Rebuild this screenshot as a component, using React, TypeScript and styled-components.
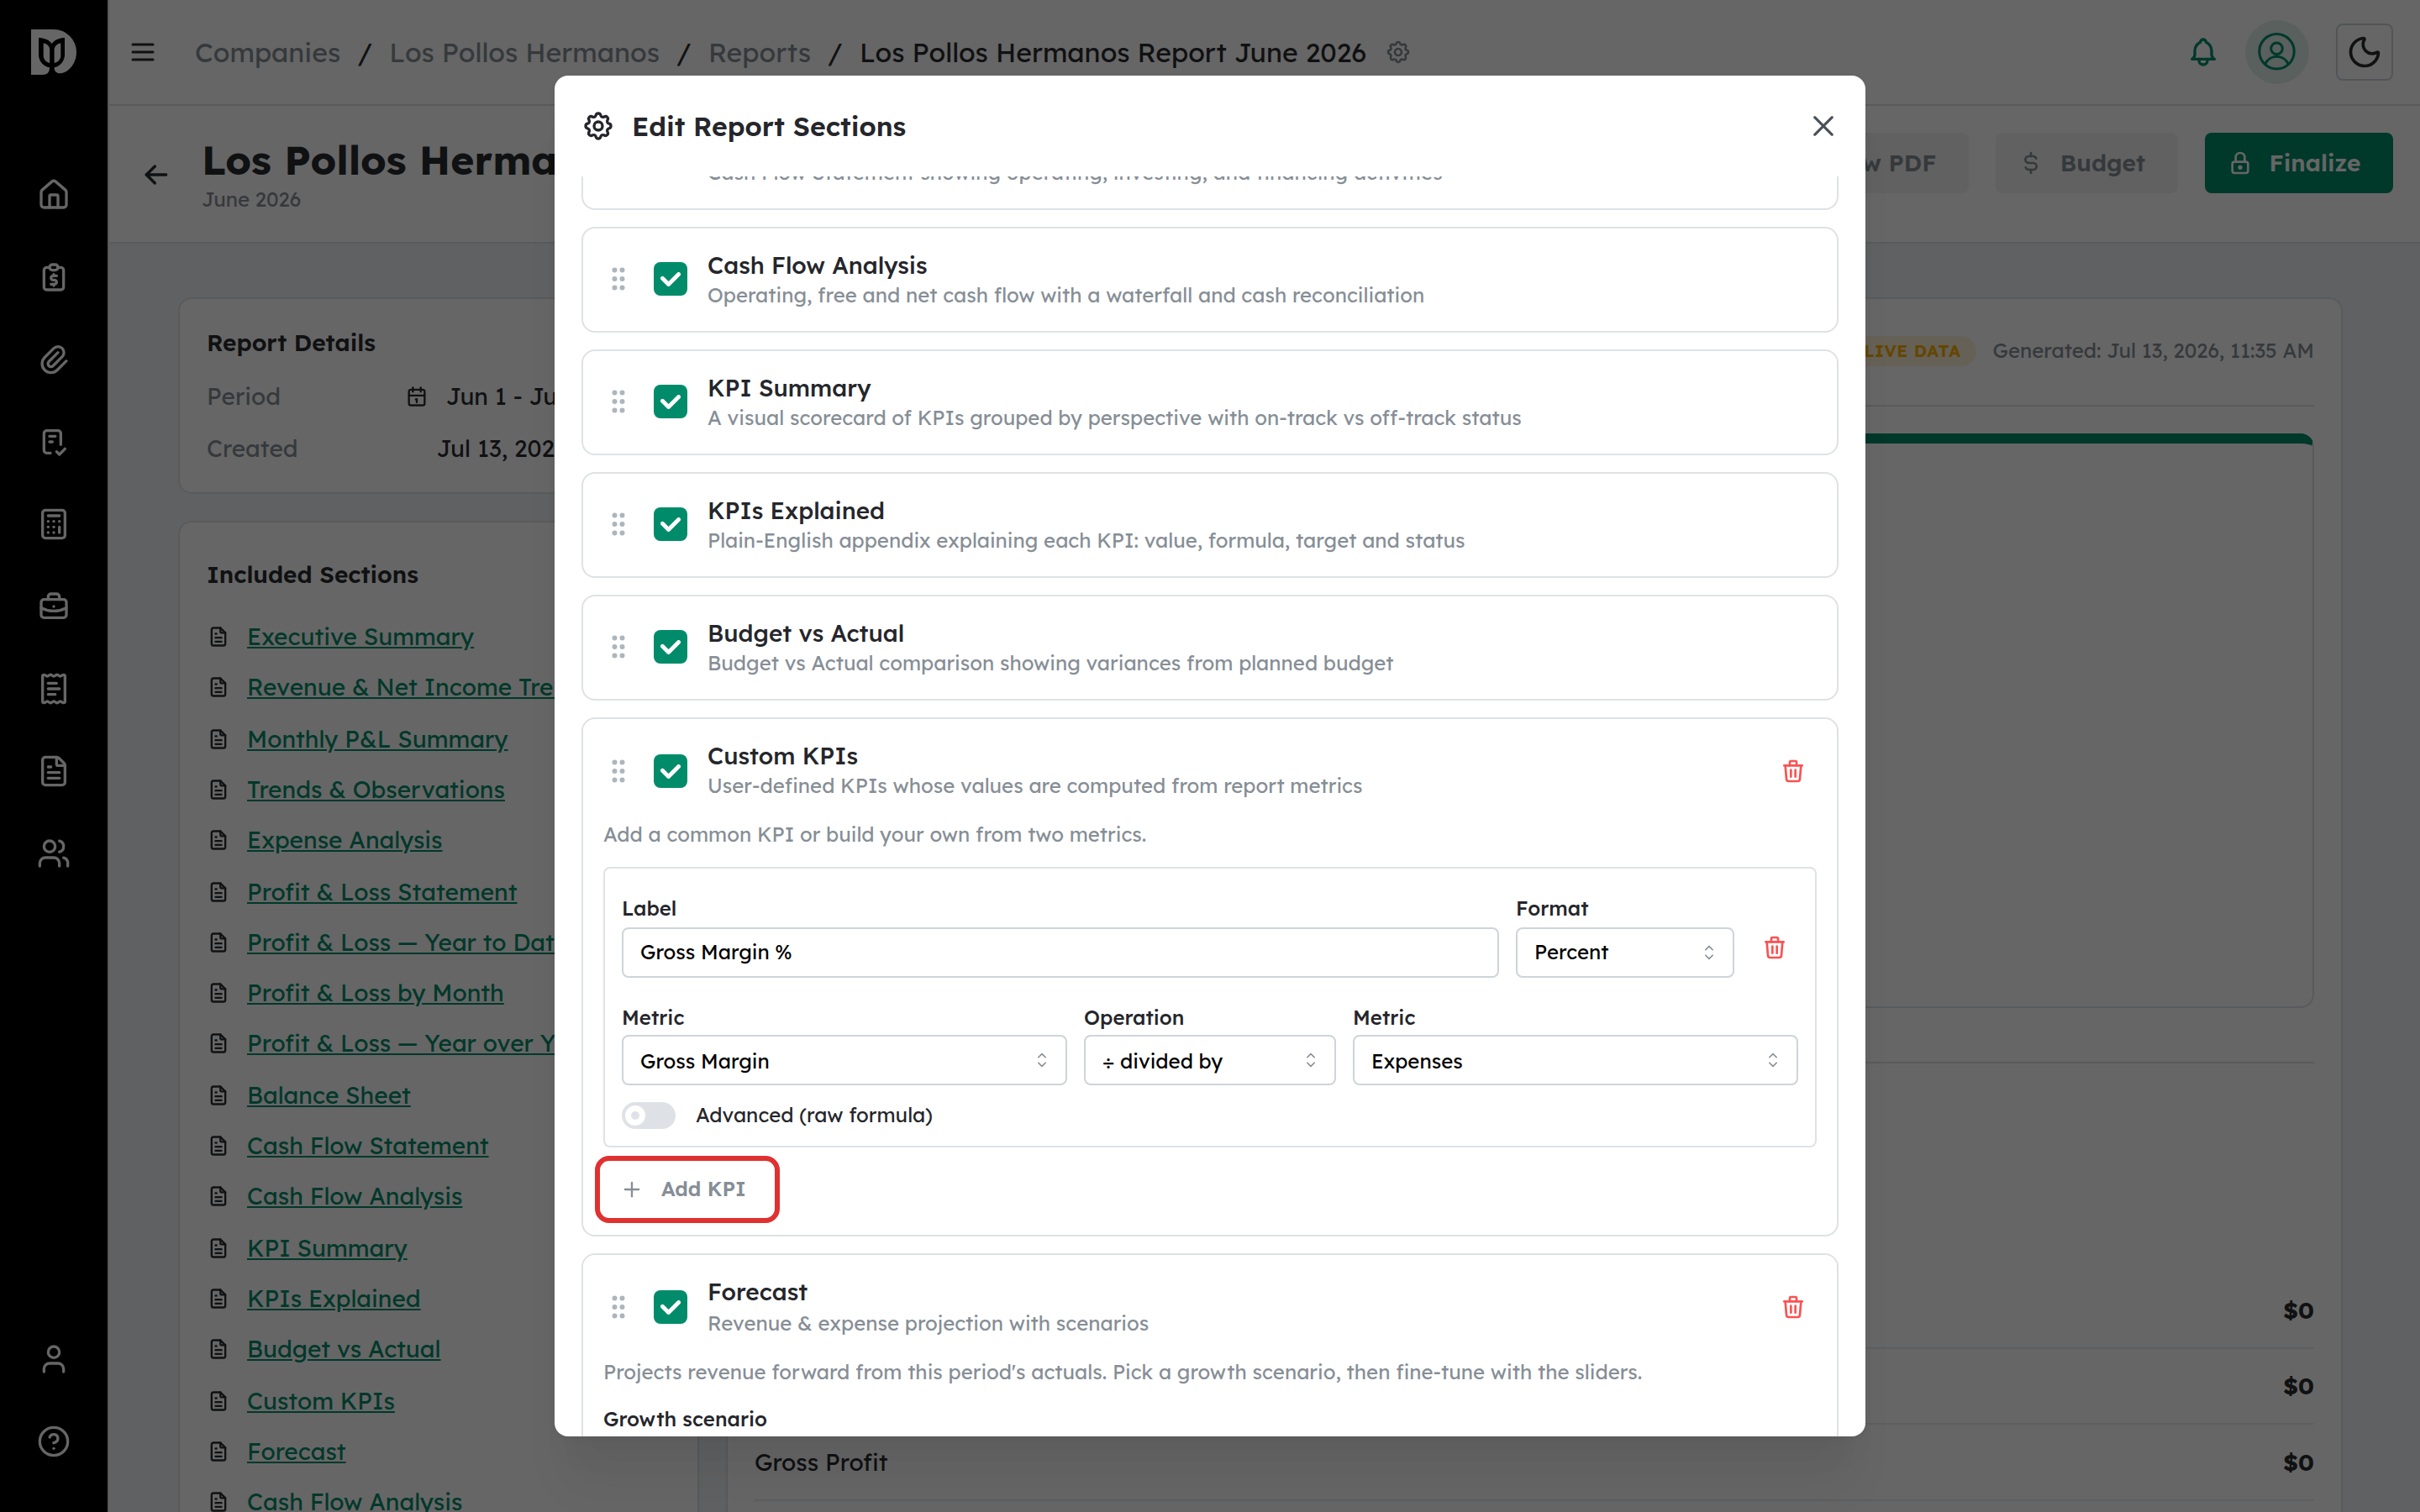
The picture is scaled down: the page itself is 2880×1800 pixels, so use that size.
import React from "react";
import styled, { createGlobalStyle, css } from "styled-components";
import { House, Calculator, ReceiptText, FileText, Users, User, CircleHelp, Moon } from "lucide-react";
import {
  TbReportMoney,
  TbPaperclip,
  TbChecklist,
  TbBriefcase,
  TbFileText,
  TbArrowLeft,
  TbMenu2,
  TbSettings,
  TbBell,
  TbLock,
  TbCurrencyDollar,
  TbCalendar,
  TbTrash,
  TbGripVertical,
  TbPlus,
  TbEye,
} from "react-icons/tb";

const color = {
  green: "#008c6a",
  text: "#25262b",
  ink: "#292b2f",
  dimmed: "#868e96",
  border: "#dee2e6",
  inputBorder: "#ced4da",
  page: "#f1f3f5",
  red: "#fa5252",
  highlight: "#e03131",
};

const GlobalStyle = createGlobalStyle`
  * { box-sizing: border-box; }
  body {
    margin: 0;
    font-family: "Lexend", "Inter", sans-serif;
    color: ${color.ink};
    background: #fff;
  }
  svg { display: block; flex-shrink: 0; }
`;

/* ---------- application shell ---------- */

const Shell = styled.div`
  position: relative;
  display: flex;
  width: 2880px;
  height: 1800px;
  overflow: hidden;
`;

const Sidebar = styled.nav`
  display: flex;
  flex-direction: column;
  align-items: center;
  width: 128px;
  padding: 35px 0 64px;
  background: #000;
  color: #fff;
`;

const NavGroup = styled.div<{ $bottom?: boolean }>`
  display: flex;
  flex-direction: column;
  gap: 58px;
  ${(p) => (p.$bottom ? "margin-top: auto;" : "margin-top: 123px;")}
`;

const Main = styled.div`
  flex: 1;
  display: flex;
  flex-direction: column;
  min-width: 0;
  border-left: 2px solid ${color.border};
`;

const TopBar = styled.header`
  display: flex;
  align-items: center;
  height: 126px;
  padding: 0 32px 0 22px;
  border-bottom: 2px solid ${color.border};
  background: #fff;
`;

const Breadcrumbs = styled.div`
  display: flex;
  align-items: center;
  margin-left: 44px;
  font-size: 32px;
  line-height: 50px;
  white-space: nowrap;
`;

const Crumb = styled.span<{ $current?: boolean }>`
  color: ${(p) => (p.$current ? color.ink : color.dimmed)};
`;

const Slash = styled.span`
  width: 58px;
  text-align: center;
`;

const CrumbGear = styled.span`
  margin-left: 22px;
  color: ${color.dimmed};
`;

const TopActions = styled.div`
  display: flex;
  align-items: center;
  margin-left: auto;
  color: ${color.green};
`;

const Avatar = styled.div`
  display: flex;
  align-items: center;
  justify-content: center;
  width: 76px;
  height: 76px;
  margin: 0 32px 0 30px;
  border-radius: 50%;
  background: rgba(0, 140, 106, 0.13);
`;

const ThemeButton = styled.button`
  display: flex;
  align-items: center;
  justify-content: center;
  width: 68px;
  height: 68px;
  padding: 0;
  border: 2px solid ${color.inputBorder};
  border-radius: 8px;
  background: #fff;
  color: ${color.ink};
`;

const PageHeader = styled.div`
  display: flex;
  align-items: flex-start;
  height: 164px;
  padding: 32px 32px 0 36px;
  border-bottom: 2px solid ${color.border};
  background: #fff;
`;

const BackArrow = styled.div`
  margin-top: 30px;
`;

const TitleBlock = styled.div`
  margin: 1px 0 0 34px;
  white-space: nowrap;
`;

const PageTitle = styled.h1`
  margin: 0;
  font-size: 48px;
  line-height: 62px;
  font-weight: 700;
`;

const PageSubtitle = styled.div`
  font-size: 24px;
  line-height: 32px;
  color: ${color.dimmed};
`;

const PageActions = styled.div`
  display: flex;
  gap: 32px;
  margin-left: auto;
`;

const ActionButton = styled.button<{ $primary?: boolean }>`
  display: flex;
  align-items: center;
  gap: 19px;
  height: 72px;
  padding: 0 38.5px 0 26px;
  border: 0;
  border-radius: 8px;
  font: 600 28px/36px "Lexend", "Inter", sans-serif;
  white-space: nowrap;
  background: ${(p) => (p.$primary ? color.green : "#f2f2f2")};
  color: ${(p) => (p.$primary ? "#fff" : color.dimmed)};
`;

const Content = styled.div`
  flex: 1;
  display: flex;
  align-items: stretch;
  gap: 32px;
  min-height: 0;
  padding: 64px 92px 0 82px;
  background: ${color.page};
`;

const SideColumn = styled.div`
  display: flex;
  flex-direction: column;
  gap: 32px;
  width: 620px;
`;

const Card = styled.section<{ $grow?: boolean }>`
  padding: 30px 32px;
  border: 2px solid ${color.border};
  border-radius: 16px;
  background: #fff;
  ${(p) =>
    p.$grow &&
    css`
      flex: 1;
      min-height: 0;
      border-bottom: 0;
      border-radius: 16px 16px 0 0;
      padding-bottom: 0;
    `}
`;

const CardTitle = styled.h2<{ $offset?: number }>`
  margin: ${(p) => p.$offset ?? 0}px 0 0;
  font-size: 28px;
  line-height: 44px;
  font-weight: 600;
`;

const DetailList = styled.div`
  display: flex;
  flex-direction: column;
  gap: 18px;
  margin-top: 20px;
`;

const DetailRow = styled.div`
  display: flex;
  align-items: center;
  justify-content: space-between;
  font-size: 28px;
  line-height: 44px;
  white-space: nowrap;
`;

const DetailLabel = styled.span`
  color: ${color.dimmed};
`;

const DetailValue = styled.span`
  display: flex;
  align-items: center;
  gap: 21px;
`;

const SectionLinks = styled.div`
  display: flex;
  flex-direction: column;
  margin-top: 30px;
`;

const SectionLinkRow = styled.div<{ $pitch: number }>`
  display: flex;
  align-items: flex-start;
  gap: 20px;
  height: ${(p) => p.$pitch}px;
  svg {
    margin-top: 8px;
  }
`;

const SectionLink = styled.a`
  color: ${color.green};
  font-size: 28px;
  line-height: 44px;
  text-decoration: underline;
  white-space: nowrap;
`;

const ReportMeta = styled.div`
  display: flex;
  align-items: center;
  justify-content: flex-end;
  gap: 20px;
  height: 98px;
  padding-bottom: 32px;
  border-bottom: 2px solid ${color.border};
`;

const LiveBadge = styled.span`
  display: flex;
  align-items: center;
  height: 36px;
  padding: 0 18px 1px;
  border-radius: 18px;
  background: #fff3d9;
  color: #fab005;
  font-size: 20px;
  line-height: 36px;
  font-weight: 700;
  letter-spacing: 0.5px;
`;

const Generated = styled.span`
  padding-bottom: 2px;
  font-size: 24px;
  line-height: 36px;
  color: ${color.dimmed};
`;

const ChartFrame = styled.div`
  height: 684px;
  margin: 32px 0 64px;
  border: 2px solid ${color.border};
  border-top: 12px solid ${color.green};
  border-radius: 16px;
`;

const SummaryTable = styled.div`
  padding-top: 249px;
  border-top: 2px solid ${color.border};
`;

const SummaryRow = styled.div`
  display: flex;
  align-items: center;
  justify-content: space-between;
  height: 90.5px;
  border-bottom: 2px solid #e9ecef;
  font-size: 28px;
`;

const Amount = styled.span`
  margin-left: auto;
  font-weight: 700;
`;

/* ---------- modal ---------- */

const Overlay = styled.div`
  position: absolute;
  inset: 0;
  display: flex;
  justify-content: center;
  align-items: center;
  background: rgba(0, 0, 0, 0.6);
`;

const Modal = styled.div`
  display: flex;
  flex-direction: column;
  width: 1560px;
  height: 1620px;
  overflow: hidden;
  border-radius: 16px;
  background: #fff;
  color: ${color.text};
  box-shadow: 0 2px 6px rgba(0, 0, 0, 0.05), 0 72px 56px -14px rgba(0, 0, 0, 0.05),
    0 34px 34px -14px rgba(0, 0, 0, 0.04);
`;

const ModalHeader = styled.div`
  display: flex;
  align-items: center;
  gap: 20px;
  flex: 0 0 120px;
  padding: 0 30px 0 32px;
`;

const ModalTitle = styled.h2`
  margin: 0;
  font-size: 32px;
  line-height: 50px;
  font-weight: 600;
`;

const CloseButton = styled.button`
  margin-left: auto;
  padding: 0;
  border: 0;
  background: none;
  color: #495057;
`;

const ModalBody = styled.div`
  flex: 1;
  min-height: 0;
  overflow: hidden;
  padding: 0 32px;
`;

/* The list is scrolled so that its first row is cut by the header. */
const SectionList = styled.div`
  display: flex;
  flex-direction: column;
  gap: 20px;
  margin-top: -86px;
`;

const SectionCard = styled.div`
  padding: 24px;
  border: 2px solid ${color.border};
  border-radius: 16px;
`;

const SectionHead = styled.div<{ $tall?: boolean }>`
  display: flex;
  align-items: center;
  gap: 24px;
  height: ${(p) => (p.$tall ? 76 : 72)}px;
  margin-bottom: ${(p) => (p.$tall ? 0 : 2)}px;
`;

const Grip = styled.span`
  color: #adb5bd;
`;

const CheckBox = styled.span`
  display: flex;
  align-items: center;
  justify-content: center;
  width: 40px;
  height: 40px;
  border-radius: 8px;
  background: ${color.green};
  color: #fff;
`;

const SectionText = styled.div<{ $shift: number; $gap: number }>`
  flex: 1;
  display: flex;
  flex-direction: column;
  gap: ${(p) => p.$gap}px;
  margin-top: ${(p) => p.$shift}px;
`;

const SectionTitle = styled.div`
  font-size: 28px;
  line-height: 36px;
  font-weight: 500;
`;

const SectionDescription = styled.div`
  font-size: 24px;
  line-height: 34px;
  color: ${color.dimmed};
`;

const DeleteButton = styled.button<{ $field?: boolean }>`
  display: flex;
  align-items: center;
  justify-content: center;
  width: 56px;
  height: 56px;
  padding: 0;
  border: 0;
  background: none;
  color: ${color.red};
  ${(p) => p.$field && "align-self: flex-end; margin-bottom: 8px;"}
`;

const Note = styled.p<{ $top: number }>`
  margin: ${(p) => p.$top}px 0 0;
  font-size: 24px;
  line-height: 38px;
  color: ${color.dimmed};
`;

const KpiBox = styled.div`
  margin-top: 20px;
  padding: 28px 20px 20px;
  border: 2px solid ${color.border};
  border-radius: 8px;
`;

const FieldRow = styled.div<{ $gap: number }>`
  display: flex;
  gap: 20px;
  label {
    gap: ${(p) => p.$gap}px;
  }
  & + & {
    margin-top: 28px;
  }
`;

const Field = styled.label<{ $width?: number }>`
  display: flex;
  flex-direction: column;
  ${(p) => (p.$width ? `width: ${p.$width}px;` : "flex: 1;")}
`;

const FieldLabel = styled.span`
  font-size: 24px;
  line-height: 38px;
  font-weight: 500;
`;

const Control = styled.div`
  display: flex;
  align-items: center;
  justify-content: space-between;
  height: 60px;
  padding: 0 14px 0 20px;
  border: 2px solid ${color.inputBorder};
  border-radius: 8px;
  color: #000;
  font-size: 24px;
  svg {
    color: ${color.dimmed};
  }
`;

const ControlValue = styled.span<{ $raised?: boolean }>`
  ${(p) => (p.$raised ? "padding-bottom: 2px;" : "padding-top: 1px;")}
  line-height: 36px;
`;

const SwitchRow = styled.div`
  display: flex;
  align-items: center;
  gap: 24px;
  height: 32px;
  margin-top: 20px;
  font-size: 24px;
`;

const SwitchLabel = styled.span`
  padding-bottom: 2px;
`;

const SwitchTrack = styled.span`
  display: flex;
  align-items: center;
  width: 64px;
  height: 32px;
  padding: 0 4px;
  border-radius: 16px;
  background: ${color.border};
`;

const SwitchThumb = styled.span`
  width: 24px;
  height: 24px;
  border: 7px solid #fff;
  border-radius: 50%;
`;

const AddButton = styled.button`
  display: flex;
  align-items: center;
  gap: 21px;
  width: 200px;
  height: 60px;
  margin-top: 20px;
  padding: 0 0 0 20px;
  border: 0;
  border-radius: 7px;
  outline: 6px solid ${color.highlight};
  outline-offset: 4px;
  background: none;
  color: ${color.dimmed};
  font: 600 24px/36px "Lexend", "Inter", sans-serif;
`;

const AddLabel = styled.span`
  padding-bottom: 2px;
`;

const Subheading = styled.div`
  height: 62px;
  margin-top: 18px;
  font-size: 24px;
  line-height: 38px;
  font-weight: 500;
`;

/* ---------- drawings ---------- */

const Logo = () => (
  <svg width="54" height="54" viewBox="0 0 54 54">
    <path
      fill="#fff"
      d="M0 0H27A27 27 0 0 1 54 27C54 42 43 52.3 34.5 52.3C30.5 52.3 27.8 50 27.6 46V40H22V46C22 51 19 54 14 54H0Z"
    />
    <path fill="#000" d="M9 10C15 10 21 12 24.7 17C28.5 12 34 10 40 10V30A15.5 15.5 0 0 1 9 30Z" />
    <path fill="#fff" d="M14.7 16.3C19 17.3 22 20 22.2 24V40C17.5 39 14.7 35.5 14.7 31Z" />
    <path fill="#fff" d="M35.3 16.3C31 17.3 27.8 20 27.6 24V40C32.3 39 35.3 35.5 35.3 31Z" />
  </svg>
);

const ProfileIcon = () => (
  <svg width="46" height="46" viewBox="0 0 46 46" fill="none" stroke="currentColor" strokeWidth="3">
    <circle cx="22.5" cy="22.3" r="20.7" />
    <circle cx="22.5" cy="18.8" r="6.8" />
    <path d="M8.8 37.2A15 15 0 0 1 36.2 37.2" />
  </svg>
);

const CheckIcon = () => (
  <svg width="24" height="17" viewBox="0 0 10 7" fill="currentColor">
    <path d="M4 4.586L1.707 2.293A1 1 0 1 0 .293 3.707l3 3a.997.997 0 0 0 1.414 0l5-5A1 1 0 1 0 8.293.293L4 4.586z" />
  </svg>
);

const CloseIcon = () => (
  <svg width="40" height="40" viewBox="0 0 15 15" fill="currentColor">
    <path d="M11.7816 4.03157C12.0062 3.80702 12.0062 3.44295 11.7816 3.2184C11.5571 2.99385 11.193 2.99385 10.9685 3.2184L7.50005 6.68682L4.03164 3.2184C3.80708 2.99385 3.44301 2.99385 3.21846 3.2184C2.99391 3.44295 2.99391 3.80702 3.21846 4.03157L6.68688 7.49999L3.21846 10.9684C2.99391 11.193 2.99391 11.5571 3.21846 11.7816C3.44301 12.0062 3.80708 12.0062 4.03164 11.7816L7.50005 8.31316L10.9685 11.7816C11.193 12.0062 11.5571 12.0062 11.7816 11.7816C12.0062 11.5571 12.0062 11.193 11.7816 10.9684L8.31322 7.49999L11.7816 4.03157Z" />
  </svg>
);

const ChevronsIcon = () => (
  <svg width="28" height="28" viewBox="0 0 15 15" fill="currentColor">
    <path d="M4.93179 5.43179C4.75605 5.60753 4.75605 5.89245 4.93179 6.06819C5.10753 6.24392 5.39245 6.24392 5.56819 6.06819L7.49999 4.13638L9.43179 6.06819C9.60753 6.24392 9.89245 6.24392 10.0682 6.06819C10.2439 5.89245 10.2439 5.60753 10.0682 5.43179L7.81819 3.18179C7.73379 3.0974 7.61933 3.04999 7.49999 3.04999C7.38064 3.04999 7.26618 3.0974 7.18179 3.18179L4.93179 5.43179ZM10.0682 9.56819C10.2439 9.39245 10.2439 9.10753 10.0682 8.93179C9.89245 8.75606 9.60753 8.75606 9.43179 8.93179L7.49999 10.8636L5.56819 8.93179C5.39245 8.75606 5.10753 8.75606 4.93179 8.93179C4.75605 9.10753 4.75605 9.39245 4.93179 9.56819L7.18179 11.8182C7.35753 11.9939 7.64245 11.9939 7.81819 11.8182L10.0682 9.56819Z" />
  </svg>
);

/* ---------- data ---------- */

const crumbs = ["Companies", "Los Pollos Hermanos", "Reports"];

const includedSections = [
  "Executive Summary",
  "Revenue & Net Income Trends",
  "Monthly P&L Summary",
  "Trends & Observations",
  "Expense Analysis",
  "Profit & Loss Statement",
  "Profit & Loss — Year to Date",
  "Profit & Loss by Month",
  "Profit & Loss — Year over Year",
  "Balance Sheet",
  "Cash Flow Statement",
  "Cash Flow Analysis",
  "KPI Summary",
  "KPIs Explained",
  "Budget vs Actual",
  "Custom KPIs",
  "Forecast",
  "Cash Flow Analysis",
];

/* Rows repeat every 60.6px and start on even pixels. */
const rowTop = (i: number) => Math.round(30.301 * i) * 2;

const simpleSections = [
  ["Cash Flow Statement", "Cash Flow Statement showing operating, investing, and financing activities"],
  ["Cash Flow Analysis", "Operating, free and net cash flow with a waterfall and cash reconciliation"],
  ["KPI Summary", "A visual scorecard of KPIs grouped by perspective with on-track vs off-track status"],
  ["KPIs Explained", "Plain-English appendix explaining each KPI: value, formula, target and status"],
  ["Budget vs Actual", "Budget vs Actual comparison showing variances from planned budget"],
];

/* ---------- composed parts ---------- */

type SectionHeaderProps = {
  title: string;
  description: string;
  removable?: boolean;
  shift?: number;
  gap?: number;
};

const SectionHeader = ({ title, description, removable, shift = 0, gap = 0 }: SectionHeaderProps) => (
  <SectionHead $tall={removable}>
    <Grip>
      <TbGripVertical size={36} />
    </Grip>
    <CheckBox>
      <CheckIcon />
    </CheckBox>
    <SectionText $shift={shift} $gap={gap}>
      <SectionTitle>{title}</SectionTitle>
      <SectionDescription>{description}</SectionDescription>
    </SectionText>
    {removable && (
      <DeleteButton>
        <TbTrash size={32} />
      </DeleteButton>
    )}
  </SectionHead>
);

type ControlFieldProps = { label: string; value: string; width?: number; plain?: boolean; raised?: boolean };

const ControlField = ({ label, value, width, plain, raised }: ControlFieldProps) => (
  <Field $width={width}>
    <FieldLabel>{label}</FieldLabel>
    <Control>
      <ControlValue $raised={raised}>{value}</ControlValue>
      {!plain && <ChevronsIcon />}
    </Control>
  </Field>
);

export default function App() {
  return (
    <Shell>
      <GlobalStyle />
      <Sidebar>
        <Logo />
        <NavGroup>
          <House size={40} />
          <TbReportMoney size={40} />
          <TbPaperclip size={40} />
          <TbChecklist size={40} />
          <Calculator size={40} />
          <TbBriefcase size={40} />
          <ReceiptText size={40} />
          <FileText size={40} />
          <Users size={40} />
        </NavGroup>
        <NavGroup $bottom>
          <User size={40} />
          <CircleHelp size={40} />
        </NavGroup>
      </Sidebar>

      <Main>
        <TopBar>
          <TbMenu2 size={36} />
          <Breadcrumbs>
            {crumbs.map((c) => (
              <React.Fragment key={c}>
                <Crumb>{c}</Crumb>
                <Slash>/</Slash>
              </React.Fragment>
            ))}
            <Crumb $current>Los Pollos Hermanos Report June 2026</Crumb>
            <CrumbGear>
              <TbSettings size={32} />
            </CrumbGear>
          </Breadcrumbs>
          <TopActions>
            <TbBell size={40} />
            <Avatar>
              <ProfileIcon />
            </Avatar>
            <ThemeButton>
              <Moon size={44} />
            </ThemeButton>
          </TopActions>
        </TopBar>

        <PageHeader>
          <BackArrow>
            <TbArrowLeft size={40} />
          </BackArrow>
          <TitleBlock>
            <PageTitle>Los Pollos Hermanos Report June 2026</PageTitle>
            <PageSubtitle>June 2026</PageSubtitle>
          </TitleBlock>
          <PageActions>
            <ActionButton>
              <TbEye size={32} />
              View PDF
            </ActionButton>
            <ActionButton>
              <TbCurrencyDollar size={32} />
              Budget
            </ActionButton>
            <ActionButton $primary>
              <TbLock size={32} />
              Finalize
            </ActionButton>
          </PageActions>
        </PageHeader>

        <Content>
          <SideColumn>
            <Card>
              <CardTitle>Report Details</CardTitle>
              <DetailList>
                <DetailRow>
                  <DetailLabel>Period</DetailLabel>
                  <DetailValue>
                    <TbCalendar size={28} />
                    Jun 1 - Jun 30, 2026
                  </DetailValue>
                </DetailRow>
                <DetailRow>
                  <DetailLabel>Created</DetailLabel>
                  <DetailValue>Jul 13, 2026 11:31 AM</DetailValue>
                </DetailRow>
              </DetailList>
            </Card>
            <Card $grow>
              <CardTitle $offset={10}>Included Sections</CardTitle>
              <SectionLinks>
                {includedSections.map((s, i) => (
                  <SectionLinkRow key={i} $pitch={rowTop(i + 1) - rowTop(i)}>
                    <TbFileText size={28} />
                    <SectionLink>{s}</SectionLink>
                  </SectionLinkRow>
                ))}
              </SectionLinks>
            </Card>
          </SideColumn>

          <Card $grow>
            <ReportMeta>
              <LiveBadge>LIVE DATA</LiveBadge>
              <Generated>Generated: Jul 13, 2026, 11:35 AM</Generated>
            </ReportMeta>
            <ChartFrame />
            <SummaryTable>
              <SummaryRow>
                <Amount>$0</Amount>
              </SummaryRow>
              <SummaryRow>
                <Amount>$0</Amount>
              </SummaryRow>
              <SummaryRow>
                Gross Profit
                <Amount>$0</Amount>
              </SummaryRow>
            </SummaryTable>
          </Card>
        </Content>
      </Main>

      <Overlay>
        <Modal>
          <ModalHeader>
            <TbSettings size={40} />
            <ModalTitle>Edit Report Sections</ModalTitle>
            <CloseButton>
              <CloseIcon />
            </CloseButton>
          </ModalHeader>
          <ModalBody>
            <SectionList>
              {simpleSections.map(([title, description]) => (
                <SectionCard key={title}>
                  <SectionHeader title={title} description={description} shift={2} />
                </SectionCard>
              ))}

              <SectionCard>
                <SectionHeader
                  title="Custom KPIs"
                  description="User-defined KPIs whose values are computed from report metrics"
                  removable
                  shift={-2}
                />
                <Note $top={18}>Add a common KPI or build your own from two metrics.</Note>
                <KpiBox>
                  <FieldRow $gap={4}>
                    <ControlField label="Label" value="Gross Margin %" plain raised />
                    <ControlField label="Format" value="Percent" width={260} raised />
                    <DeleteButton $field>
                      <TbTrash size={32} />
                    </DeleteButton>
                  </FieldRow>
                  <FieldRow $gap={2}>
                    <ControlField label="Metric" value="Gross Margin" />
                    <ControlField label="Operation" value="÷ divided by" width={300} />
                    <ControlField label="Metric" value="Expenses" />
                  </FieldRow>
                  <SwitchRow>
                    <SwitchTrack>
                      <SwitchThumb />
                    </SwitchTrack>
                    <SwitchLabel>Advanced (raw formula)</SwitchLabel>
                  </SwitchRow>
                </KpiBox>
                <AddButton>
                  <TbPlus size={28} />
                  <AddLabel>Add KPI</AddLabel>
                </AddButton>
              </SectionCard>

              <SectionCard>
                <SectionHeader
                  title="Forecast"
                  description="Revenue & expense projection with scenarios"
                  removable
                  gap={2}
                />
                <Note $top={20}>
                  Projects revenue forward from this period's actuals. Pick a growth scenario, then fine-tune with the
                  sliders.
                </Note>
                <Subheading>Growth scenario</Subheading>
              </SectionCard>
            </SectionList>
          </ModalBody>
        </Modal>
      </Overlay>
    </Shell>
  );
}
